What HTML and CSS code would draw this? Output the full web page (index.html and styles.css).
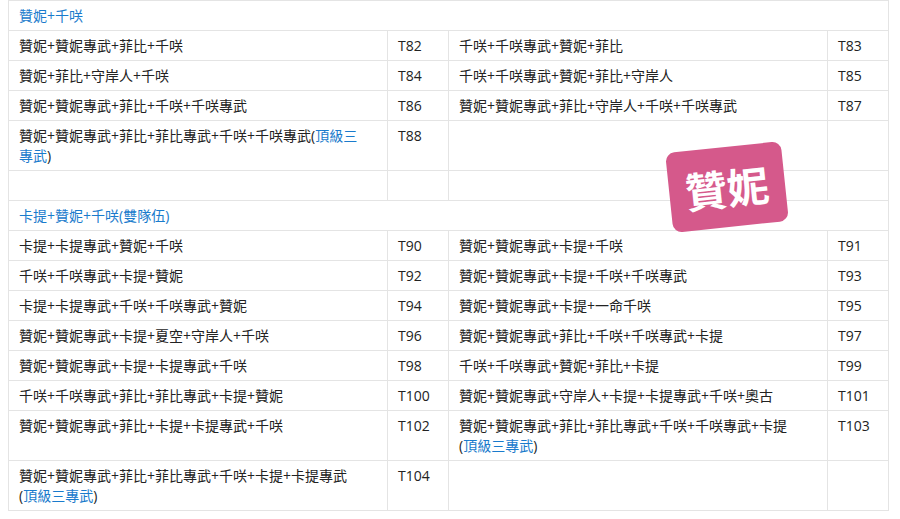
FILE: index.html
```html
<!DOCTYPE html>
<html lang="zh-Hant">
<head>
<meta charset="utf-8">
<title>贊妮配隊</title>
<link rel="stylesheet" href="styles.css">
</head>
<body>
<div class="page">
  <table class="teams">
    <colgroup>
      <col class="c-name"><col class="c-code"><col class="c-name"><col class="c-code">
    </colgroup>
    <tbody>
      <tr><td class="group" colspan="4">贊妮+千咲</td></tr>
      <tr><td class="name">贊妮+贊妮專武+菲比+千咲</td><td>T82</td><td class="name">千咲+千咲專武+贊妮+菲比</td><td>T83</td></tr>
      <tr><td class="name">贊妮+菲比+守岸人+千咲</td><td>T84</td><td class="name">千咲+千咲專武+贊妮+菲比+守岸人</td><td>T85</td></tr>
      <tr><td class="name">贊妮+贊妮專武+菲比+千咲+千咲專武</td><td>T86</td><td class="name">贊妮+贊妮專武+菲比+守岸人+千咲+千咲專武</td><td>T87</td></tr>
      <tr><td class="name">贊妮+贊妮專武+菲比+菲比專武+千咲+千咲專武(<span class="link">頂級三專武</span>)</td><td>T88</td><td class="name"></td><td></td></tr>
      <tr><td class="name">&nbsp;</td><td></td><td class="name"></td><td></td></tr>
      <tr><td class="group" colspan="4">卡提+贊妮+千咲(雙隊伍)</td></tr>
      <tr><td class="name">卡提+卡提專武+贊妮+千咲</td><td>T90</td><td class="name">贊妮+贊妮專武+卡提+千咲</td><td>T91</td></tr>
      <tr><td class="name">千咲+千咲專武+卡提+贊妮</td><td>T92</td><td class="name">贊妮+贊妮專武+卡提+千咲+千咲專武</td><td>T93</td></tr>
      <tr><td class="name">卡提+卡提專武+千咲+千咲專武+贊妮</td><td>T94</td><td class="name">贊妮+贊妮專武+卡提+一命千咲</td><td>T95</td></tr>
      <tr><td class="name">贊妮+贊妮專武+卡提+夏空+守岸人+千咲</td><td>T96</td><td class="name">贊妮+贊妮專武+菲比+千咲+千咲專武+卡提</td><td>T97</td></tr>
      <tr><td class="name">贊妮+贊妮專武+卡提+卡提專武+千咲</td><td>T98</td><td class="name">千咲+千咲專武+贊妮+菲比+卡提</td><td>T99</td></tr>
      <tr><td class="name">千咲+千咲專武+菲比+菲比專武+卡提+贊妮</td><td>T100</td><td class="name">贊妮+贊妮專武+守岸人+卡提+卡提專武+千咲+奧古</td><td>T101</td></tr>
      <tr><td class="name">贊妮+贊妮專武+菲比+卡提+卡提專武+千咲</td><td>T102</td><td class="name">贊妮+贊妮專武+菲比+菲比專武+千咲+千咲專武+卡提(<span class="link">頂級三專武</span>)</td><td>T103</td></tr>
      <tr><td class="name">贊妮+贊妮專武+菲比+菲比專武+千咲+卡提+卡提專武(<span class="link">頂級三專武</span>)</td><td>T104</td><td class="name"></td><td></td></tr>
    </tbody>
  </table>
  <div class="sticker">贊妮</div>
</div>
</body>
</html>
```

FILE: styles.css
```css
html, body {
  margin: 0;
  padding: 0;
  background: #ffffff;
}

body {
  font-family: "Open Sans", "Noto Sans CJK TC", sans-serif;
  font-size: 14px;
  color: #222222;
}

.page {
  position: relative;
  padding: 0 0 0 8px;
}

.teams {
  border-collapse: collapse;
  table-layout: fixed;
  width: 881px;
}

.c-name {
  width: 379px;
}

.c-code {
  width: 61px;
}

.teams td {
  border: 1px solid #e4e4e4;
  padding: 5px 10px 4px 10px;
  line-height: 20px;
  vertical-align: top;
}

.teams td.name {
  padding-right: 26px;
}

.teams td.group {
  color: #1a7bcc;
}

.link {
  color: #1a7bcc;
}

.sticker {
  position: absolute;
  left: 669px;
  top: 147px;
  width: 116px;
  height: 80px;
  border-radius: 9px;
  background: #d5598b;
  color: #ffffff;
  font-family: "Noto Sans CJK TC", sans-serif;
  font-weight: 700;
  font-size: 42px;
  line-height: 80px;
  text-align: center;
  transform: rotate(-6deg);
}
```
